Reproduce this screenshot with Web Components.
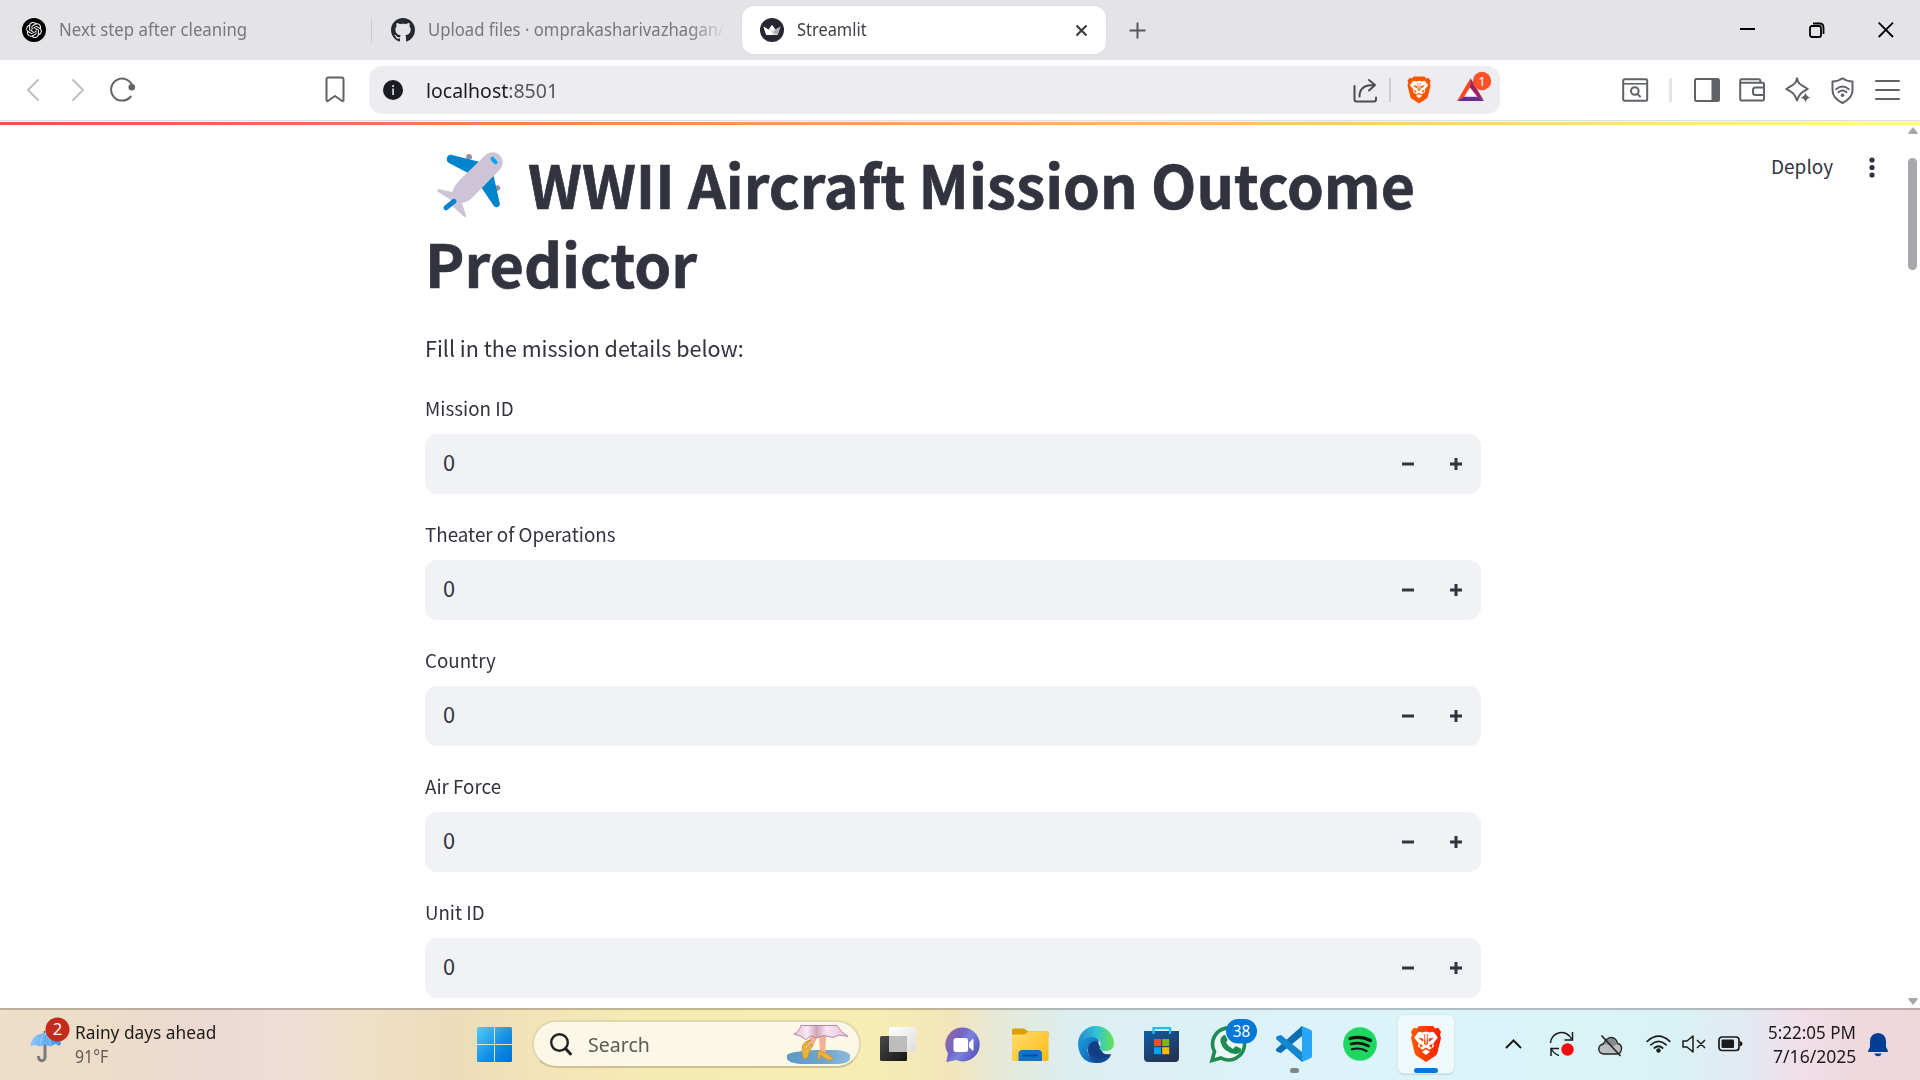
<!DOCTYPE html>
<html lang="en">
<head>
<meta charset="utf-8">
<title>Streamlit</title>
<style>
html,body{margin:0;padding:0;width:1920px;height:1080px;overflow:hidden;background:#fff}
desktop-screen{height:1080px}
</style>
</head>
<body>
<desktop-screen></desktop-screen>
<script>
const UI = '"Noto Sans","Open Sans",sans-serif';
const APP = '"Noto Sans CJK SC","Noto Sans CJK JP",sans-serif';

const lion = (fill) => `<path fill="${fill}" d="M8 0h14l2.200 2.500 3-.8L30 5.800l-1 3.200 1 3-3.800 15.500q-.5 1.500-1.700 2.300L15 36l-9.500-6.200q-1.200-.8-1.700-2.300L0 12l1-3L0 5.800l2.800-4.100 3 .8z"/>
<path fill="#fff" d="M7.500 5.800l4 .8 3.500-1 3.500 1 4-.8 4.300 6-4.500 5.400.7 3.300-4.500 3.300-3.500-2.300-3.500 2.300L7 20.500l.7-3.300-4.500-5.400z"/>
<path fill="#fff" d="M15 23.300l4 2.400-4 3.200-4-3.200z"/>
<path fill="${fill}" d="M7 11.700l5 .7.6 2-1 1.100zM23 11.700l-5 .7-.6 2 1 1.100zM12.300 8.500h5.400l-1.200 1.600.6 7.400-2.100 1.700-2.100-1.700.6-7.400zM8.300 17.800l3.700 1.700-2.500 2.500zM21.700 17.800L18 19.500l2.500 2.500z"/>
<path fill="#fff" d="M13.900 8.500h2.200l-.7 9.200-.4.500-.4-.5z"/>`;

const G = 'stroke="#5f6368" fill="none" stroke-width="2" stroke-linecap="round" stroke-linejoin="round"';

const ICONS = {
openai:[24,24,`<circle cx="12" cy="12" r="12"/><path fill="#fff" transform="translate(4 4) scale(.667)" d="M22.2819 9.8211a5.9847 5.9847 0 0 0-.5157-4.9108 6.0462 6.0462 0 0 0-6.5098-2.9A6.0651 6.0651 0 0 0 4.9807 4.1818a5.9847 5.9847 0 0 0-3.9977 2.9 6.0462 6.0462 0 0 0 .7427 7.0966 5.98 5.98 0 0 0 .511 4.9107 6.051 6.051 0 0 0 6.5146 2.9001A5.9847 5.9847 0 0 0 13.2599 24a6.0557 6.0557 0 0 0 5.7718-4.2058 5.9894 5.9894 0 0 0 3.9977-2.9001 6.0557 6.0557 0 0 0-.7475-7.0729zm-9.022 12.6081a4.4755 4.4755 0 0 1-2.8764-1.0408l.1419-.0804 4.7783-2.7582a.7948.7948 0 0 0 .3927-.6813v-6.7369l2.02 1.1686a.071.071 0 0 1 .038.052v5.5826a4.504 4.504 0 0 1-4.4945 4.4944zm-9.6607-4.1254a4.4708 4.4708 0 0 1-.5346-3.0137l.142.0852 4.783 2.7582a.7712.7712 0 0 0 .7806 0l5.8428-3.3685v2.3324a.0804.0804 0 0 1-.0332.0615L9.74 19.9502a4.4992 4.4992 0 0 1-6.1408-1.6464zM2.3408 7.8956a4.485 4.485 0 0 1 2.3655-1.9728V11.6a.7664.7664 0 0 0 .3879.6765l5.8144 3.3543-2.0201 1.1685a.0757.0757 0 0 1-.071 0l-4.8303-2.7865A4.504 4.504 0 0 1 2.3408 7.872zm16.5963 3.8558L13.1038 8.364 15.1192 7.2a.0757.0757 0 0 1 .071 0l4.8303 2.7913a4.4944 4.4944 0 0 1-.6765 8.1042v-5.6772a.79.79 0 0 0-.407-.667zm2.0107-3.0231l-.142-.0852-4.7735-2.7818a.7759.7759 0 0 0-.7854 0L9.409 9.2297V6.8974a.0662.0662 0 0 1 .0284-.0615l4.8303-2.7866a4.4992 4.4992 0 0 1 6.6802 4.66zM8.3065 12.863l-2.02-1.1638a.0804.0804 0 0 1-.038-.0567V6.0742a4.4992 4.4992 0 0 1 7.3757-3.4537l-.142.0805L8.704 5.459a.7948.7948 0 0 0-.3927.6813zm1.0976-2.3654l2.602-1.4998 2.6069 1.4998v2.9994l-2.5974 1.4997-2.6067-1.4997Z"/>`],
github:[24,24,`<path fill="#24292f" transform="scale(1.5)" d="M8 0C3.580 0 0 3.580 0 8c0 3.540 2.290 6.530 5.470 7.590.4.070.55-.17.55-.38 0-.19-.01-.82-.01-1.490-2.010.37-2.530-.49-2.690-.94-.09-.23-.48-.94-.82-1.130-.28-.15-.68-.52-.01-.53.63-.01 1.080.58 1.230.82.72 1.210 1.870.87 2.330.66.07-.52.28-.87.51-1.070-1.780-.2-3.640-.89-3.640-3.950 0-.87.31-1.590.82-2.150-.08-.2-.36-1.020.08-2.120 0 0 .67-.21 2.200.82.64-.18 1.320-.27 2-.27s1.360.09 2 .27c1.530-1.040 2.200-.82 2.200-.82.44 1.100.16 1.920.08 2.120.51.56.82 1.270.82 2.150 0 3.070-1.870 3.750-3.650 3.950.29.25.54.73.54 1.480 0 1.070-.01 1.930-.01 2.200 0 .21.15.46.55.38A8.010 8.010 0 0 0 16 8c0-4.420-3.580-8-8-8z"/>`],
crown:[24,24,`<circle cx="12" cy="12" r="12" fill="#262730"/><path fill="#ddd" d="M3.500 8.500l5 3L12 7l3.500 4.500 5-3L18 16.300q-.2.700-1 .7H7q-.8 0-1-.7z"/><path fill="#fff" d="M3.500 8.500l9 6-.3 2.500H7q-.8 0-1-.7zM12 7l2.500 3.500-2.500 2-2.500-2z"/><path fill="#aaa" d="M20.500 8.500l-8 6 5 1.500z"/>`],
tabclose:[13,13,`<path d="M1.500 1.500l10 10M11.500 1.500l-10 10" stroke="#3b3d41" stroke-width="2.200" fill="none"/>`],
plus:[17,17,`<path d="M8.500.5v16M.5 8.500h16" stroke="#55595d" stroke-width="2"/>`],
min:[15,2,`<path fill="#000" d="M0 0h15v2H0z"/>`],
restore:[16,16,`<rect x="1" y="4" width="11" height="11" rx="2" fill="none" stroke="#000" stroke-width="1.800"/><path d="M4 1.500h6.500q4 0 4 4V12" fill="none" stroke="#000" stroke-width="1.800"/>`],
winclose:[16,16,`<path d="M.7.7l14.300 14.300M15 .7L.7 15" stroke="#000" stroke-width="1.800"/>`],
back:[14,24,`<path d="M12 2L2 12l10 10" stroke="#c0c2c5" stroke-width="2.200" fill="none" stroke-linecap="round" stroke-linejoin="round"/>`],
fwd:[14,24,`<path d="M2 2l10 10L2 22" stroke="#c0c2c5" stroke-width="2.200" fill="none" stroke-linecap="round" stroke-linejoin="round"/>`],
reload:[26,26,`<path d="M20.700 19.500A11 11 0 1 1 22.500 9" ${G}/><circle cx="21.800" cy="10.200" r="3.300" fill="#5f6368"/>`],
bookmark:[20,27,`<path d="M1.500 3.500q0-2 2-2h13q2 0 2 2v21l-1 .7L10 20l-7.500 5.200-1-.7z" ${G}/>`],
info:[20,20,`<circle cx="10" cy="10" r="10" fill="#1b1b22"/><path d="M9.200 8.500h1.800V15H9.200zM9.200 5h1.800v1.900H9.200z" fill="#cfcfd6"/>`],
share:[25,24,`<g fill="none" stroke="#4a4c51" stroke-width="2" stroke-linecap="round" stroke-linejoin="round"><path d="M1.500 7v13.500q0 2 2 2h17.500q2 0 2-2V18.500"/><path d="M6.500 17.500Q6.500 6 20 6h1.500M16 1l6 5-6 5.500"/></g>`],
lionTool:[24,28,`<g transform="translate(.5 .5) scale(.77 .75)">${lion('#ff5500')}</g>`],
bat:[36,32,`<path d="M14 5L1 29h27z" fill="#fff"/><path d="M14.500 6L14 15.500 8 25l-7 4z" fill="#ff4724"/><path d="M14.500 6L28 29l-6.500-4L14 15.500z" fill="#9e1f63"/><path d="M1 29l7-4.200h13.500L28 29z" fill="#662d91"/><circle cx="26" cy="9" r="9.200" fill="#ff5229"/><text x="26" y="13.600" text-anchor="middle" font-family="Noto Sans" font-size="13" fill="#fff">1</text>`],
find:[27,24,`<rect x="1.200" y="1.200" width="24" height="21.500" rx="1.500" ${G}/><path d="M1 5.800h25" stroke="#5f6368" stroke-width="1.600"/><circle cx="12.800" cy="13" r="3.800" ${G}/><path d="M15.500 16l2.500 2.500" ${G}/>`],
panel:[26,24,`<rect x="1" y="1" width="24" height="22" rx="1.500" ${G}/><path fill="#5f6368" d="M17.500 1H25v22h-7.500z"/>`],
wallet:[27,24,`<path d="M1.200 5V2.500q0-1.300 1.300-1.300H20q1.300 0 1.300 1.500V4M1.200 4.800H23.500q1.500 0 1.500 1.500V21q0 1.500-1.500 1.500H2.700q-1.500 0-1.500-1.500zM25 9.500h-8.500q-2.500 0-2.500 2.500v2.500q0 2.500 2.500 2.500H25" ${G}/>`],
spark:[26,26,`<path d="M12 1.200C13.200 7.500 16 7.800 22.800 12 16 16 14.500 16.500 12 23.500 9.500 16.500 8 16 1.200 12 8 7.800 10.800 7.500 12 1.200z" ${G}/><path stroke="#fff" stroke-width="1" fill="#5f6368" d="M20.500 15q1 4.500 5.500 5.500-4.500 1-5.500 5.500-1-4.500-5.500-5.500 4.500-1 5.500-5.500z"/>`],
shield:[23,27,`<path d="M11.500 1.200q4.500 3.300 10 3.300v8.500q0 8-10 13-10-5-10-13V4.500q5.500 0 10-3.300z" ${G}/><path d="M5.200 12.200q6.300-5.500 12.600 0M7.500 15.200q4-3.400 8 0" ${G}/><circle cx="11.500" cy="18.200" r="1.800" fill="#5f6368"/>`],
menu:[25,22,`<path d="M1 2h23M1 11h23M1 20h23" stroke="#5f6368" stroke-width="2" stroke-linecap="round"/>`],
plane:[66,66,`<ellipse cx="32" cy="5" rx="3" ry="3" fill="#998ea4"/><circle cx="60.500" cy="36" r="2.700" fill="#998ea4"/><path fill="#0084ce" d="M14 2.800L43 10 33 22 12 11Q9 9 10 5.500 11 2.200 14 2.800zM56 21l6.700 30q.5 3-2.200 4-2.500.8-4-1.500L44 35z"/><path fill="#cdc4d6" d="M48 3.500C53-1.500 60-.5 63.500 4c3.500 5 2.500 10-.5 13.500L35 46q-5 4.500-10 5l4.300 13q-.5 1.800-2.300.8L16 54.500 14 48 .5 39.500q-.8-2 1.200-2.500l13.500 3q2-6 6-10.500z"/><path d="M9 55.800l8-6.500" stroke="#0084ce" stroke-width="5" stroke-linecap="round"/><path d="M55.500 6.800l3 3.500" stroke="#00a6ed" stroke-width="4" stroke-linecap="round"/>`],
minus:[12,12,`<path d="M0 6h12" stroke="#31333f" stroke-width="3"/>`],
add:[12,12,`<path d="M0 6h12M6 0v12" stroke="#31333f" stroke-width="3"/>`],
dots:[6,22,`<g fill="#31333f"><circle cx="3" cy="3" r="2.600"/><circle cx="3" cy="10.500" r="2.600"/><circle cx="3" cy="18" r="2.600"/></g>`],
up:[10,7,`<path fill="#a8a8ac" d="M5 0l4.500 5.500v1.500H.5V5.500z"/>`],
down:[10,7,`<path fill="#a8a8ac" d="M5 7L.5 1.500V0h9v1.500z"/>`],
umbrella:[42,46,`<defs><linearGradient id="u"><stop offset="0" stop-color="#8cc8fb"/><stop offset="1" stop-color="#3d93ee"/></linearGradient></defs><path d="M15 24v16.500a3.200 3.200 0 0 1-6.400 0V39" stroke="#7b7b7d" stroke-width="3" fill="none"/><path d="M14.500 14v3" stroke="#555" stroke-width="1.500"/><path fill="url(#u)" d="M0 29Q2.500 17 15 16q13 0 16 10l-1.500 3-4-2-5 2.500-5.500-2-5 2-5-1.500z"/><path d="M10 28q.5-8 5-12 4.500 4 5.500 13" fill="none" stroke="#bfe1fb" stroke-opacity=".6"/><circle cx="27.500" cy="12.500" r="12" fill="#c42b1c"/><text x="27.500" y="18.300" text-anchor="middle" font-family="Noto Sans" font-size="16.500" fill="#fff">2</text>`],
windows:[35,35,`<defs><linearGradient id="w" x2="1" y2="1"><stop offset="0" stop-color="#4cd0ff"/><stop offset=".55" stop-color="#1590e4"/><stop offset="1" stop-color="#006fd0"/></linearGradient></defs><path fill="url(#w)" d="M1.500 0H17v17H0V1.500Q0 0 1.500 0zM18 0h15.500Q35 0 35 1.500V17H18zM0 18h17v17H1.500Q0 35 0 33.500zM18 18h17v15.500q0 1.500-1.500 1.500H18z"/>`],
search:[22,23,`<circle cx="9.500" cy="9.500" r="8.300" fill="none" stroke="#222" stroke-width="2.400"/><path d="M15.500 15.500l5 5.500" stroke="#222" stroke-width="3" stroke-linecap="round"/>`],
shoes:[66,40,`<defs><linearGradient id="k"><stop offset="0" stop-color="#e7bcd7"/><stop offset=".25" stop-color="#faeaf5"/><stop offset=".42" stop-color="#cfa3b6"/><stop offset=".6" stop-color="#f8e5f2"/><stop offset="1" stop-color="#e6c0da"/></linearGradient><linearGradient id="l"><stop offset="0" stop-color="#5b98c8"/><stop offset=".6" stop-color="#6fa6cf"/><stop offset="1" stop-color="#8db9da"/></linearGradient></defs><path fill="url(#l)" d="M1 30Q4 27 14 26.500 20 25 30 25h20q10 .5 14 4.500v5q-3 4.500-14 4.500H14Q3 38 1 34z"/><path fill="#efb294" d="M25 11h7l-5 10-5 7-2-8zM33 11h7l-.5 13 .5 5-6-3z"/><path d="M25 15q-7 1-8.500 6l-.5 7 1.500 6 4-1 2.500-8 3-5-2-1-6 6q-1-4 6-10z" fill="#eab33e" stroke="#c48a2a" stroke-width=".7"/><path d="M33 25q-2 3-1 9.500l2 .3.500-5q4 4.500 8 5.200 5 .4 4.500-1.500-3-3-6-5-2 0-8-3.500z" fill="#eab33e" stroke="#c48a2a" stroke-width=".7"/><path fill="url(#k)" stroke="#b07aa2" stroke-width=".9" d="M15 .5h36q4 7 11 11l-9-1.500-6 2.500-9-2-8 2.500-5-2.500-5 4-6-3.500-6-2q5-2 7-8.500z"/>`],
taskview:[36,35,`<defs><linearGradient id="a" x2="1" y2="1"><stop offset="0" stop-color="#4a4a4a"/><stop offset="1" stop-color="#161616"/></linearGradient><linearGradient id="b" x2="1" y2="1"><stop offset="0" stop-color="#fff"/><stop offset="1" stop-color="#dedede"/></linearGradient></defs><rect x="9" y="0" width="27" height="25" rx="1.500" fill="url(#b)"/><rect x="0" y="9" width="27" height="25" rx="1.500" fill="url(#a)"/><path fill="#bdbdbd" d="M9 9h18v16H9z"/>`],
chat:[34,36,`<defs><linearGradient id="c" x1="0" x2="1" y1=".2" y2=".8"><stop offset="0" stop-color="#93679f"/><stop offset=".35" stop-color="#7165c5"/><stop offset=".55" stop-color="#7d82de"/><stop offset="1" stop-color="#4e4fb5"/></linearGradient></defs><path fill="url(#c)" d="M17 .5a17 17 0 1 1-7 32.600L1 35q-1-.2-.5-1.500L2 26.500A17 17 0 0 1 17 .5z"/><rect x="7.500" y="11" width="14.500" height="14" rx="2.500" fill="#fff"/><path fill="#fff" d="M23 16l3.500-4h1v11.500h-1L23 20z"/>`],
folder:[37,34,`<defs><linearGradient id="f" x2="1" y2="1"><stop offset="0" stop-color="#ffdd6e"/><stop offset="1" stop-color="#fdb913"/></linearGradient></defs><path fill="#dd9d08" d="M0 2q0-1.500 1.500-1.500H11q1.500 0 2.500 1L16 3.500h19.500q1 0 1 1V10H0z"/><path fill="url(#f)" d="M0 6.500h11.500q1.500 0 2.500-1l2.500-1.800h19q1 0 1 1V32q0 1-1 1H1q-1 0-1-1z"/><path fill="#1273c4" d="M6.500 33v-7q0-4 4-4H26q4 0 4 4v7z"/><path d="M11 27.500h14" stroke="#09508f" stroke-width="1.800" stroke-linecap="round"/>`],
edge:[36,36,`<defs><linearGradient id="e1" x2="1" y2="0"><stop offset="0" stop-color="#2489cd"/><stop offset=".5" stop-color="#2fc2d9"/><stop offset="1" stop-color="#69e34e"/></linearGradient><linearGradient id="e2" x2="1" y2="1"><stop offset="0" stop-color="#1ba0e4"/><stop offset="1" stop-color="#0c54a2"/></linearGradient></defs><path fill="#123f83" d="M10 20Q10 11 18 10L22 20q2 9 11 7-4 9-15 9Q9 32 10 20z"/><path fill="url(#e2)" d="M0 18Q3 9 12 9q9 0 9.500 7.500L20 14q-9-1-10.500 9Q10 33 20 36 2 37 0 18z"/><path fill="url(#e1)" d="M0 18A18 18 0 0 1 36 16q0 8-8.500 8-5.500 0-6-2.500 1.500-1.800 1-5Q21 10 13 10 5 10 0 18z"/><path fill="#144b94" d="M11 19q0 11 10 12.500 7 .8 12.500-4.500Q30 36 18 36 8 32 11 19z"/>`],
store:[36,36,`<defs><linearGradient id="s" x2=".6" y2="1"><stop offset="0" stop-color="#0c5da9"/><stop offset="1" stop-color="#263453"/></linearGradient></defs><path fill="url(#s)" d="M0 4h35v27q0 4-4 4H4q-4 0-4-4z"/><path d="M9.500 7V1.200h16.500V7" fill="none" stroke="#20bdf1" stroke-width="2.200"/><path fill="#f25022" d="M10 12h7v7h-7z"/><path fill="#7fba00" d="M18.200 12h7v7h-7z"/><path fill="#00a4ef" d="M10 20.200h7v7h-7z"/><path fill="#ffb900" d="M18.200 20.200h7v7h-7z"/>`],
whatsapp:[48,44,`<path d="M2 41.500l2.500-9A16 16 0 1 1 11 39z" fill="#e9f7f5" stroke="#1f8a54" stroke-width="3.600"/><path fill="#1f8a54" d="M12 17.500q2-2.500 3.500-1l2 4q.3 1-1.500 3 2.500 4.500 7 6.500l2-2.300q.8-.7 1.700-.2l4 2q.8.5.4 1.800-1.500 4-6 3.700Q13 33 10.500 23q-.7-3.500 1.500-5.500z"/><rect x="16" y="0" width="31" height="24.500" rx="12.200" fill="#0078d7"/><text x="31.500" y="17.800" text-anchor="middle" font-family="Noto Sans" font-size="15.500" textLength="17.500" lengthAdjust="spacingAndGlyphs" fill="#fff">38</text>`],
vscode:[36,36,`<path fill="#0b6db4" d="M26 0v10L5 27l-3.500-1L0 24.500V23z"/><path fill="#1486cf" d="M26 36V26L5 9 1.500 10 0 11.500V13z"/><path fill="#27a6f5" d="M26 0l9 4q1 .6 1 2v24q0 1.400-1 2l-9 4z"/>`],
spotify:[34,34,`<circle cx="17" cy="17" r="16.800" fill="#1ed760"/><g fill="none" stroke="#0c1a10" stroke-linecap="round"><path d="M7 11.500q11-3 20.500 2" stroke-width="3.200"/><path d="M8 17q9.500-2.500 17.500 2" stroke-width="2.700"/><path d="M9 22.200q8-2 14.500 1.800" stroke-width="2.200"/></g>`],
lionTask:[30,36,`<defs><linearGradient id="li"><stop offset="0" stop-color="#ff5a00"/><stop offset="1" stop-color="#fb1f00"/></linearGradient></defs>${lion('url(#li)')}`],
chevron:[17,10,`<path d="M1 9l7.500-7.500L16 9" fill="none" stroke="#1b1b1b" stroke-width="2"/>`],
sync:[26,26,`<g fill="none" stroke="#1b1b1b" stroke-width="1.500"><path d="M1.500 12A11 11 0 0 1 22.500 8M23.500 1v8h-8M10 24.500Q5 23 2 17.500M2 25v-7.500h8"/></g><circle cx="18.500" cy="18.500" r="6.200" fill="#f50c0c"/>`],
cloud:[25,22,`<path fill="#b9bdc0" stroke="#222" stroke-width="1.400" d="M6 19a5 5 0 0 1-.5-10Q8 3 13 2.500q5.500.5 6.500 6 4.500 1 4 5.500-.5 5-5 5z"/><path fill="#85898d" d="M6.500 9Q9 3.500 13 3.300q5 .5 5.700 6l-5.200 3Q11 9 6.500 9z"/><path d="M3.500.5l19 20.500" stroke="#222" stroke-width="1.600"/>`],
wifi:[25,18,`<g fill="none" stroke="#1b1b1b" stroke-width="1.700" stroke-linecap="round"><path d="M1.200 6.300q11.300-10.500 22.600 0M4.800 9.800q7.700-6.800 15.400 0M8.300 13q4.200-3.500 8.400 0"/></g><circle cx="12.500" cy="15.500" r="2.200" fill="#1b1b1b"/>`],
mute:[24,18,`<path d="M1 6h4l6-5v16l-6-5H1zM15 5l8 8M23 5l-8 8" fill="none" stroke="#1b1b1b" stroke-width="1.500" stroke-linejoin="round"/>`],
battery:[25,16,`<rect x="1" y="1" width="20" height="13.500" rx="3" fill="none" stroke="#1b1b1b" stroke-width="1.700"/><rect x="3.500" y="3.500" width="12.500" height="8.500" rx="1" fill="#1b1b1b"/><path fill="#1b1b1b" d="M22 5q2.500.5 2.500 2.700T22 10.500z"/>`],
bell:[20,24,`<path fill="#003e92" d="M10 0q7.500.5 8 8v6l2 4q.2 1-1 1H1q-1.200 0-1-1l2-4V8q.5-7.500 8-8zM6.500 20.500h7Q13 23.300 10 23.300T6.500 20.500z"/>`]
};

/* Base class: an open shadow root filled from the class's own markup. */
class Base extends HTMLElement {
  constructor(){ super(); this.attachShadow({mode:'open'}); }
  fill(html){ const t=document.createElement('template'); t.innerHTML=html; this.shadowRoot.replaceChildren(t.content.cloneNode(true)); }
}

customElements.define('app-icon', class extends Base {
  connectedCallback(){
    const [w,h,body]=ICONS[this.getAttribute('name')];
    this.fill(`<style>:host{display:block;flex:none;width:${w}px;height:${h}px}svg{display:block;overflow:visible}</style><svg width="${w}" height="${h}" viewBox="0 0 ${w} ${h}">${body}</svg>`);
  }
});

/* A single line of text whose glyphs are condensed or widened to the "w" width. */
customElements.define('fit-text', class extends Base {
  connectedCallback(){
    const w=+this.getAttribute('w');
    this.fill(`<style>:host{display:block;flex:none;width:${w}px}span{display:inline-block;vertical-align:top;white-space:pre;transform-origin:0 50%}</style><span><slot></slot></span>`);
    const s=this.shadowRoot.querySelector('span');
    s.style.transform=`scaleX(${w/s.offsetWidth})`;
  }
});

customElements.define('tab-strip', class extends Base {
  connectedCallback(){ this.fill(`<style>
  :host{display:flex;align-items:flex-start;height:60px;background:#e4e3e8;font:17.6px/24px ${UI};color:#77777b}
  .sep{width:1px;height:24px;background:#cbcad0;margin:19px 0 0 124px}
  .fade{-webkit-mask-image:linear-gradient(90deg,#000 88%,transparent 101%);mask-image:linear-gradient(90deg,#000 88%,transparent 101%)}
  .active{display:flex;align-items:flex-start;width:364px;height:48px;margin:6px 0 0 18px;border-radius:12px;background:#fff;color:#3f4147;box-shadow:0 0 2px #d3d2d8}
  fit-text{margin:17px 0 0 13px}.active fit-text{margin:11px 0 0 12.500px}
  </style>
  <app-icon name="openai" style="margin:18px 0 0 22px"></app-icon><fit-text w="188">Next step after cleaning</fit-text>
  <div class="sep"></div>
  <app-icon name="github" style="margin:18px 0 0 19px"></app-icon><fit-text class="fade" w="296">Upload files · omprakasharivazhagan/</fit-text>
  <div class="active"><app-icon name="crown" style="margin:12px 0 0 18px"></app-icon><fit-text w="70">Streamlit</fit-text><app-icon name="tabclose" style="margin:17.500px 0 0 208.500px"></app-icon></div>
  <app-icon name="plus" style="margin:21.500px 0 0 22.500px"></app-icon>
  <app-icon name="min" style="margin:28px 0 0 594.500px"></app-icon>
  <app-icon name="restore" style="margin:22px 0 0 54px"></app-icon>
  <app-icon name="winclose" style="margin:22px 0 0 52.500px"></app-icon>`); }
});

customElements.define('nav-bar', class extends Base {
  connectedCallback(){ this.fill(`<style>
  :host{display:flex;align-items:flex-start;height:60px;background:#fff}
  .url{display:flex;align-items:flex-start;width:1131px;height:48px;margin:6px 0 0 24px;border-radius:13px;background:#edecf1;font:20.800px/28px ${UI};color:#1b1b20}
  .port{color:#55555a}
  .sep{width:2px;height:24px;background:#cfced4;margin:12px 0 0 11px}
  .sep2{width:3px;height:24px;border-radius:1px;background:#e4e3e8;margin:18px 0 0 20px}
  </style>
  <app-icon name="back" style="margin:18px 0 0 26px"></app-icon>
  <app-icon name="fwd" style="margin:18px 0 0 31px"></app-icon>
  <app-icon name="reload" style="margin:17px 0 0 25px"></app-icon>
  <app-icon name="bookmark" style="margin:16px 0 0 189px"></app-icon>
  <div class="url">
    <app-icon name="info" style="margin:14px 0 0 14px"></app-icon>
    <fit-text w="132" style="margin:9.500px 0 0 23px">localhost<span class="port">:8501</span></fit-text>
    <app-icon name="share" style="margin:13px 0 0 795px"></app-icon>
    <div class="sep"></div>
    <app-icon name="lionTool" style="margin:9.500px 0 0 16px"></app-icon>
    <app-icon name="bat" style="margin:6px 0 0 25px"></app-icon>
  </div>
  <app-icon name="find" style="margin:18px 0 0 122px"></app-icon>
  <div class="sep2"></div>
  <app-icon name="panel" style="margin:18px 0 0 22px"></app-icon>
  <app-icon name="wallet" style="margin:18px 0 0 19px"></app-icon>
  <app-icon name="spark" style="margin:17px 0 0 18.500px"></app-icon>
  <app-icon name="shield" style="margin:16.500px 0 0 20.500px"></app-icon>
  <app-icon name="menu" style="margin:19px 0 0 20.500px"></app-icon>`); }
});

customElements.define('number-input', class extends Base {
  connectedCallback(){ this.fill(`<style>
  :host{display:block;height:126px}
  .label{font-size:19px;line-height:32px;height:42px}
  .box{display:flex;align-items:center;height:60px;border-radius:12px;background:#f0f2f6}
  .val{font-size:21.800px;line-height:56px;height:60px;margin-left:18px;flex:1}
  </style>
  <div class="label"><fit-text w="${this.getAttribute('w')}"><slot></slot></fit-text></div>
  <div class="box"><div class="val">0</div><app-icon name="minus" style="margin-right:36px"></app-icon><app-icon name="add" style="margin-right:19px"></app-icon></div>`); }
});

customElements.define('page-scrollbar', class extends Base {
  connectedCallback(){ this.fill(`<style>
  :host{display:flex;flex-direction:column;align-items:center;width:15px;height:882px}
  .thumb{width:9px;height:112px;border-radius:5px;background:#a8a8ac;margin:24px 0 auto}
  </style><app-icon name="up" style="margin-top:1px"></app-icon><div class="thumb"></div><app-icon name="down" style="margin-bottom:3px"></app-icon>`); }
});

customElements.define('streamlit-page', class extends Base {
  connectedCallback(){ this.fill(`<style>
  :host{display:block;height:888px;overflow:hidden;color:#31333f;font-family:${APP}}
  .line{height:1px;background:#dfdee3;border-bottom:1px solid #f4f3f5}
  .deco{height:4px;background:linear-gradient(90deg,#ff4b4b,#ffff80);background-clip:content-box;padding-bottom:1px;box-sizing:border-box}
  .row{display:flex;align-items:flex-start;height:882px}
  .col{width:1056px;margin-left:425px;padding-top:17px}
  h1{margin:0;font-weight:700;font-size:59.400px;line-height:80px;height:158px;-webkit-text-stroke:.7px #31333f}
  .t1{display:flex;height:79px}
  p{margin:27.500px 0;font-size:22px;line-height:36px}
  .deploy{margin:24px 0 0 290px;font-size:19px;line-height:31px}
  page-scrollbar{margin-left:auto}
  </style>
  <div class="line"></div><div class="deco"></div>
  <div class="row">
  <div class="col">
    <h1><div class="t1"><app-icon name="plane" style="margin:9px 0 0 12px"></app-icon><fit-text w="887" style="margin-left:25px">WWII Aircraft Mission Outcome</fit-text></div><fit-text w="272">Predictor</fit-text></h1>
    <p><fit-text w="319">Fill in the mission details below:</fit-text></p>
    <number-input w="89">Mission ID</number-input>
    <number-input w="191">Theater of Operations</number-input>
    <number-input w="71">Country</number-input>
    <number-input w="76">Air Force</number-input>
    <number-input w="60">Unit ID</number-input>
  </div>
  <div class="deploy"><fit-text w="62">Deploy</fit-text></div>
  <app-icon name="dots" style="margin:30.500px 0 0 36px"></app-icon>
  <page-scrollbar></page-scrollbar>
  </div>`); }
});

customElements.define('task-bar', class extends Base {
  connectedCallback(){ this.fill(`<style>
  :host{display:flex;align-items:flex-start;box-sizing:border-box;height:72px;border-top:2px solid rgba(80,75,70,.32);font:17.800px/24px ${UI};color:#1b1b1b;
  background:linear-gradient(90deg,#eedfc8 0,#eddcc9 120px,#ecd9d5 220px,#efddd7 280px,#f0e0c9 350px,#eddcba 455px,#f3e4b8 540px,#f6eab3 650px,#f7edb4 870px,#f3e5b9 950px,#e7e8d4 990px,#dceef0 1070px,#dcf2f8 1250px,#daf4fa 1450px,#d9f3f5 1670px,#e4e8f1 1755px,#f1dee8 1800px,#efd9df 1850px,#efd7da) border-box}
  .weather{margin:9.500px 0 0 3px}.deg{color:#5f5b55;display:block}
  .pill{display:flex;align-items:flex-start;box-sizing:border-box;width:329px;height:48px;margin:10px 0 0 20px;border:2px solid #e2d8b0;border-bottom-color:#cdc292;border-radius:24px;background:#fcf8e8;font-size:20.500px;line-height:28px;color:#5c5a54}
  .tile{position:relative;display:flex;justify-content:center;width:56px;height:58px;box-sizing:border-box;margin:5px 0 0 21px;border-radius:6px;background:#f0fafc;box-shadow:0 0 0 1px #d5e9ee,0 2px 1px #c3d8dc}
  .bar{position:absolute;left:16px;bottom:0;width:24px;height:5px;border-radius:3px;background:#0078d7}
  .code{display:flex;flex-direction:column;align-items:center;margin:16px 0 0 18px}
  .pip{width:9px;height:5px;border-radius:3px;background:#80878a;margin-top:6px}
  .clock{display:flex;flex-direction:column;align-items:flex-end;margin:9.500px 0 0 25px}
  </style>
  <app-icon name="umbrella" style="margin:7px 0 0 30px"></app-icon>
  <div class="weather"><fit-text w="141">Rainy days ahead</fit-text><fit-text class="deg" w="33">91°F</fit-text></div>
  <app-icon name="windows" style="margin:17px 0 0 261px"></app-icon>
  <div class="pill"><app-icon name="search" style="margin:11px 0 0 16px"></app-icon><fit-text w="62" style="margin:7.500px 0 0 16px">Search</fit-text><app-icon name="shoes" style="margin:2.500px 0 0 136px"></app-icon></div>
  <app-icon name="taskview" style="margin:17px 0 0 19px"></app-icon>
  <app-icon name="chat" style="margin:16.500px 0 0 30px"></app-icon>
  <app-icon name="folder" style="margin:17.500px 0 0 32px"></app-icon>
  <app-icon name="edge" style="margin:16.500px 0 0 29px"></app-icon>
  <app-icon name="store" style="margin:17px 0 0 30px"></app-icon>
  <app-icon name="whatsapp" style="margin:9px 0 0 30px"></app-icon>
  <div class="code"><app-icon name="vscode"></app-icon><div class="pip"></div></div>
  <app-icon name="spotify" style="margin:17px 0 0 31px"></app-icon>
  <div class="tile"><app-icon name="lionTask" style="margin-top:11px"></app-icon><div class="bar"></div></div>
  <app-icon name="chevron" style="margin:29px 0 0 51px"></app-icon>
  <app-icon name="sync" style="margin:21px 0 0 27px"></app-icon>
  <app-icon name="cloud" style="margin:25px 0 0 23px"></app-icon>
  <app-icon name="wifi" style="margin:25px 0 0 22.500px"></app-icon>
  <app-icon name="mute" style="margin:25px 0 0 11px"></app-icon>
  <app-icon name="battery" style="margin:26px 0 0 12.500px"></app-icon>
  <div class="clock"><fit-text w="88">5:22:05 PM</fit-text><fit-text w="83">7/16/2025</fit-text></div>
  <app-icon name="bell" style="margin:23px 0 0 12px"></app-icon>`); }
});

customElements.define('desktop-screen', class extends Base {
  connectedCallback(){ this.fill(`<style>:host{display:flex;flex-direction:column;width:1920px;background:#fff}</style>
  <tab-strip></tab-strip><nav-bar></nav-bar><streamlit-page></streamlit-page><task-bar></task-bar>`); }
});
</script>
</body>
</html>
